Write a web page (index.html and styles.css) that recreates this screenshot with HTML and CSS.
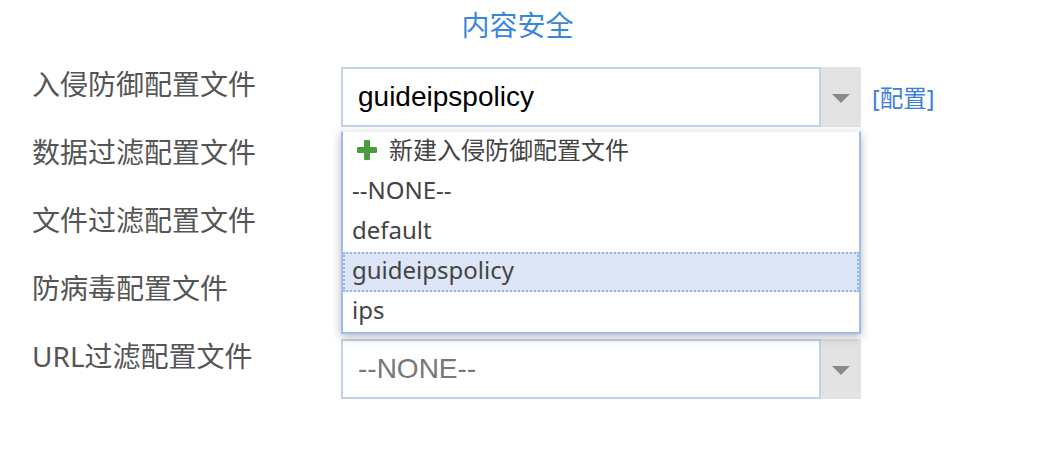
FILE: index.html
```html
<!DOCTYPE html>
<html lang="zh">
<head>
<meta charset="utf-8">
<title>内容安全</title>
<link rel="stylesheet" href="styles.css">
</head>
<body>
<div class="form">
  <div class="title">内容安全</div>

  <div class="row">
    <div class="label">入侵防御配置文件</div>
    <div class="control">
      <div class="select">
        <div class="box value">guideipspolicy</div>
        <div class="arrow"><span class="tri"></span></div>
        <ul class="dropdown">
          <li class="item new"><span class="plus"></span>新建入侵防御配置文件</li>
          <li class="item">--NONE--</li>
          <li class="item">default</li>
          <li class="item active">guideipspolicy</li>
          <li class="item">ips</li>
        </ul>
      </div>
      <a class="link">[配置]</a>
    </div>
  </div>

  <div class="row">
    <div class="label">数据过滤配置文件</div>
    <div class="control">
      <div class="select">
        <div class="box"></div>
        <div class="arrow"><span class="tri"></span></div>
      </div>
    </div>
  </div>

  <div class="row">
    <div class="label">文件过滤配置文件</div>
    <div class="control">
      <div class="select">
        <div class="box"></div>
        <div class="arrow"><span class="tri"></span></div>
      </div>
    </div>
  </div>

  <div class="row">
    <div class="label">防病毒配置文件</div>
    <div class="control">
      <div class="select">
        <div class="box"></div>
        <div class="arrow"><span class="tri"></span></div>
      </div>
    </div>
  </div>

  <div class="row">
    <div class="label">URL过滤配置文件</div>
    <div class="control">
      <div class="select">
        <div class="box placeholder">--NONE--</div>
        <div class="arrow"><span class="tri"></span></div>
      </div>
    </div>
  </div>
</div>
</body>
</html>
```

FILE: styles.css
```css
* { box-sizing: border-box; }
html, body { margin: 0; padding: 0; background: #fff; }
body {
  font-family: "Noto Sans", "Noto Sans CJK SC", sans-serif;
  color: #555;
}
.form {
  width: 1035px;
  display: flex;
  flex-direction: column;
}
.title {
  text-align: center;
  font-size: 28px;
  line-height: 50px;
  color: #3a86d8;
  margin-bottom: 17px;
}
.row {
  display: flex;
  height: 68px;
  padding-left: 32px;
}
.label {
  width: 309px;
  font-size: 28px;
  line-height: 34px;
  color: #555;
  white-space: nowrap;
}
.control {
  display: flex;
  align-items: center;
  height: 60px;
}
.select {
  position: relative;
  display: flex;
  width: 520px;
  height: 60px;
}
.box {
  flex: 1;
  border: 2px solid #c4d2e7;
  display: flex;
  align-items: center;
  padding-left: 15px;
  font-family: "Liberation Sans", Arial, sans-serif;
  font-size: 28px;
}
.value { color: #000; }
.placeholder { color: #777; }
.arrow {
  width: 40px;
  background: #e3e3e3;
  display: flex;
  align-items: center;
  justify-content: center;
}
.tri {
  width: 0;
  height: 0;
  border-left: 9px solid transparent;
  border-right: 9px solid transparent;
  border-top: 9px solid #8a8a8a;
  filter: blur(0.6px);
  margin-top: 2px;
}
.link {
  margin-left: 11px;
  font-size: 23.5px;
  color: #3b80d8;
  cursor: pointer;
}
.dropdown {
  position: absolute;
  top: 64px;
  left: 0;
  width: 520px;
  margin: 0;
  padding: 0;
  list-style: none;
  background: #fff;
  border: 2px solid #9dbdf0;
  border-top: 1px solid #eef2f8;
  box-shadow: 0 3px 9px rgba(0, 0, 0, 0.28);
  z-index: 10;
}
.item {
  height: 40px;
  line-height: 32px;
  padding-left: 9px;
  padding-bottom: 5px;
  font-size: 24px;
  color: #444;
  white-space: nowrap;
  border: 2px solid transparent;
  border-left: 0;
  border-right: 0;
  display: flex;
  align-items: center;
}
.item.new { padding-left: 14px; }
.item.active {
  background: #dce6f6;
  border: 2px dotted #93b4ea;
  padding-left: 7px;
}
.plus {
  position: relative;
  width: 20px;
  height: 20px;
  margin-right: 12px;
  flex: none;
}
.plus::before, .plus::after {
  content: "";
  position: absolute;
  background: #4c9c3f;
  border-radius: 1px;
}
.plus::before { left: 0; right: 0; top: 7px; height: 6px; }
.plus::after { top: 0; bottom: 0; left: 7px; width: 6px; }
```
